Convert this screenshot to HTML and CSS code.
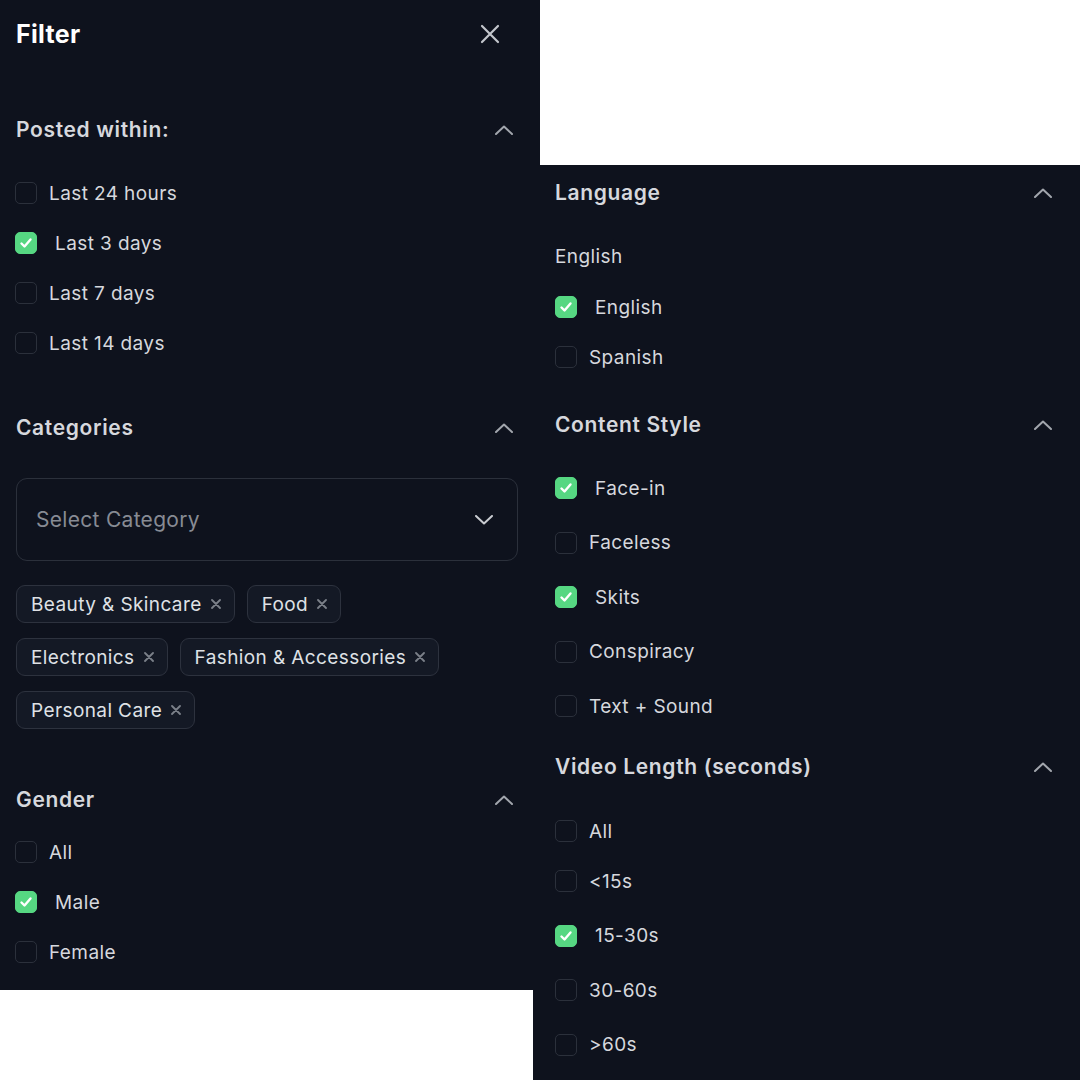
FILE: index.html
```html
<!DOCTYPE html>
<html lang="en">
<head>
    <meta charset="UTF-8">
    <title>Filter</title>
    <link rel="stylesheet" href="styles.css">
</head>
<body>
    <div class="canvas">
        <!-- first screen of the filter sheet -->
        <div class="panel panel-left">
            <div class="sheet-head">
                <span class="sheet-title">Filter</span>
                <svg class="close" width="20" height="20" viewBox="0 0 20 20"><path d="M2 2 L18 18 M18 2 L2 18"/></svg>
            </div>

            <div class="sec-head sec-posted">
                <span>Posted within:</span>
                <svg class="chev" width="18" height="10" viewBox="0 0 18 10"><path d="M1 9 L9 1.5 L17 9"/></svg>
            </div>
            <div class="options opts-posted">
                <label class="row"><span class="box"></span><span class="label">Last 24 hours</span></label>
                <label class="row on"><span class="box"><svg width="14" height="14" viewBox="0 0 14 14"><path d="M2.5 7.5 L5.5 10.5 L11.5 3.5"/></svg></span><span class="label">Last 3 days</span></label>
                <label class="row"><span class="box"></span><span class="label">Last 7 days</span></label>
                <label class="row"><span class="box"></span><span class="label">Last 14 days</span></label>
            </div>

            <div class="sec-head sec-cat">
                <span>Categories</span>
                <svg class="chev" width="18" height="10" viewBox="0 0 18 10"><path d="M1 9 L9 1.5 L17 9"/></svg>
            </div>
            <div class="select">
                <span class="placeholder">Select Category</span>
                <svg class="chev-down" width="18" height="10" viewBox="0 0 18 10"><path d="M1 1 L9 8.5 L17 1"/></svg>
            </div>
            <div class="chips">
                <span class="chip">Beauty &amp; Skincare<svg class="x" width="10" height="10" viewBox="0 0 10 10"><path d="M1 1 L9 9 M9 1 L1 9"/></svg></span>
                <span class="chip">Food<svg class="x" width="10" height="10" viewBox="0 0 10 10"><path d="M1 1 L9 9 M9 1 L1 9"/></svg></span>
                <span class="chip">Electronics<svg class="x" width="10" height="10" viewBox="0 0 10 10"><path d="M1 1 L9 9 M9 1 L1 9"/></svg></span>
                <span class="chip">Fashion &amp; Accessories<svg class="x" width="10" height="10" viewBox="0 0 10 10"><path d="M1 1 L9 9 M9 1 L1 9"/></svg></span>
                <span class="chip">Personal Care<svg class="x" width="10" height="10" viewBox="0 0 10 10"><path d="M1 1 L9 9 M9 1 L1 9"/></svg></span>
            </div>

            <div class="sec-head sec-gender">
                <span>Gender</span>
                <svg class="chev" width="18" height="10" viewBox="0 0 18 10"><path d="M1 9 L9 1.5 L17 9"/></svg>
            </div>
            <div class="options opts-gender">
                <label class="row"><span class="box"></span><span class="label">All</span></label>
                <label class="row on"><span class="box"><svg width="14" height="14" viewBox="0 0 14 14"><path d="M2.5 7.5 L5.5 10.5 L11.5 3.5"/></svg></span><span class="label">Male</span></label>
                <label class="row"><span class="box"></span><span class="label">Female</span></label>
            </div>
        </div>

        <!-- same sheet, scrolled down -->
        <div class="panel panel-right">
            <div class="sec-head sec-lang">
                <span>Language</span>
                <svg class="chev" width="18" height="10" viewBox="0 0 18 10"><path d="M1 9 L9 1.5 L17 9"/></svg>
            </div>
            <div class="lang-current">English</div>
            <div class="options opts-lang">
                <label class="row on"><span class="box"><svg width="14" height="14" viewBox="0 0 14 14"><path d="M2.5 7.5 L5.5 10.5 L11.5 3.5"/></svg></span><span class="label">English</span></label>
                <label class="row"><span class="box"></span><span class="label">Spanish</span></label>
            </div>

            <div class="sec-head sec-style">
                <span>Content Style</span>
                <svg class="chev" width="18" height="10" viewBox="0 0 18 10"><path d="M1 9 L9 1.5 L17 9"/></svg>
            </div>
            <div class="options loose opts-style">
                <label class="row on"><span class="box"><svg width="14" height="14" viewBox="0 0 14 14"><path d="M2.5 7.5 L5.5 10.5 L11.5 3.5"/></svg></span><span class="label">Face-in</span></label>
                <label class="row"><span class="box"></span><span class="label">Faceless</span></label>
                <label class="row on"><span class="box"><svg width="14" height="14" viewBox="0 0 14 14"><path d="M2.5 7.5 L5.5 10.5 L11.5 3.5"/></svg></span><span class="label">Skits</span></label>
                <label class="row"><span class="box"></span><span class="label">Conspiracy</span></label>
                <label class="row"><span class="box"></span><span class="label">Text + Sound</span></label>
            </div>

            <div class="sec-head sec-video">
                <span>Video Length (seconds)</span>
                <svg class="chev" width="18" height="10" viewBox="0 0 18 10"><path d="M1 9 L9 1.5 L17 9"/></svg>
            </div>
            <div class="options loose opts-video">
                <label class="row first-tight"><span class="box"></span><span class="label">All</span></label>
                <label class="row"><span class="box"></span><span class="label">&lt;15s</span></label>
                <label class="row on"><span class="box"><svg width="14" height="14" viewBox="0 0 14 14"><path d="M2.5 7.5 L5.5 10.5 L11.5 3.5"/></svg></span><span class="label">15-30s</span></label>
                <label class="row"><span class="box"></span><span class="label">30-60s</span></label>
                <label class="row"><span class="box"></span><span class="label">&gt;60s</span></label>
            </div>
        </div>
    </div>
</body>
</html>
```

FILE: styles.css
```css
:root {
    --bg: #0e121d;
    --line: #2b303b;
    --chip-bg: #141925;
    --text: #d6d8dd;
    --muted: #858a93;
    --green: #56d782;
}

* {
    margin: 0;
    padding: 0;
    box-sizing: border-box;
}

body {
    background: #fff;
    font-family: Inter, "Noto Sans", "Liberation Sans", sans-serif;
    color: var(--text);
    width: 1080px;
    height: 1080px;
    overflow: hidden;
}

.canvas {
    display: flex;
    align-items: flex-start;
}

.panel {
    background: var(--bg);
    display: flex;
    flex-direction: column;
    flex-shrink: 0;
}

.panel-left {
    width: 540px;
    height: 990px;
    padding: 22px 27px 0 16px;
}

.panel-right {
    width: 547px;
    height: 915px;
    margin-left: -7px;
    margin-top: 165px;
    padding: 16px 28px 0 22px;
    overflow: hidden;
}

.sheet-head {
    display: flex;
    justify-content: space-between;
    align-items: center;
    height: 24px;
}

.sheet-title {
    font-size: 25px;
    font-weight: 700;
    letter-spacing: 0.3px;
    color: #fff;
    line-height: 24px;
}

.close {
    margin-right: 13px;
    fill: none;
    stroke: #c3c6cc;
    stroke-width: 2.2;
    stroke-linecap: round;
}

.sec-head {
    display: flex;
    justify-content: space-between;
    align-items: center;
    height: 24px;
    font-size: 21px;
    font-weight: 600;
    letter-spacing: 0.65px;
    line-height: 24px;
}

.chev,
.chev-down {
    fill: none;
    stroke: #a2a6ad;
    stroke-width: 2;
    stroke-linecap: round;
    stroke-linejoin: round;
}

.chev-down {
    stroke: #c9ccd1;
}

.options {
    display: flex;
    flex-direction: column;
    gap: 28px;
}

.panel-left .options {
    margin-left: -1px;
}

.options.loose {
    gap: 32.5px;
}

.row {
    display: flex;
    align-items: center;
    height: 22px;
    font-size: 19px;
    letter-spacing: 0.4px;
}

.box {
    width: 22px;
    height: 22px;
    border: 1.5px solid var(--line);
    border-radius: 5px;
    margin-right: 12px;
    display: flex;
    align-items: center;
    justify-content: center;
    flex-shrink: 0;
}

.row.on .box {
    background: var(--green);
    border-color: var(--green);
}

.row.on .label {
    margin-left: 6px;
}

.box svg {
    fill: none;
    stroke: #fff;
    stroke-width: 2.4;
    stroke-linecap: round;
    stroke-linejoin: round;
}

.first-tight {
    margin-bottom: -4.5px;
}

/* left panel spacing */
.sec-posted { margin-top: 72px; }
.opts-posted { margin-top: 40px; }
.sec-cat { margin-top: 62px; }
.sec-gender { margin-top: 59px; }
.opts-gender { margin-top: 29px; }

.select {
    margin-top: 38px;
    height: 83px;
    width: 502px;
    border: 1.5px solid var(--line);
    border-radius: 11px;
    display: flex;
    align-items: center;
    justify-content: space-between;
    padding: 0 24px 0 19px;
}

.placeholder {
    font-size: 21px;
    letter-spacing: 0.3px;
    color: #878b94;
}

.chips {
    margin-top: 24px;
    display: flex;
    flex-wrap: wrap;
    gap: 15px 12px;
    width: 470px;
}

.chip {
    display: inline-flex;
    align-items: center;
    height: 38px;
    padding: 0 13px 0 14px;
    background: var(--chip-bg);
    border: 1.5px solid #2d323e;
    border-radius: 9px;
    font-size: 19px;
    letter-spacing: 0.4px;
    color: #dfe1e5;
    white-space: pre;
}

.chip .x {
    margin-left: 9px;
    fill: none;
    stroke: #7b8089;
    stroke-width: 1.8;
    stroke-linecap: round;
}

/* right panel spacing */
.lang-current {
    margin-top: 41px;
    font-size: 19px;
    letter-spacing: 0.4px;
    line-height: 22px;
}

.opts-lang { margin-top: 28px; }
.sec-style { margin-top: 45px; }
.opts-style { margin-top: 40px; }
.sec-video { margin-top: 38px; }
.opts-video { margin-top: 41px; }
```
